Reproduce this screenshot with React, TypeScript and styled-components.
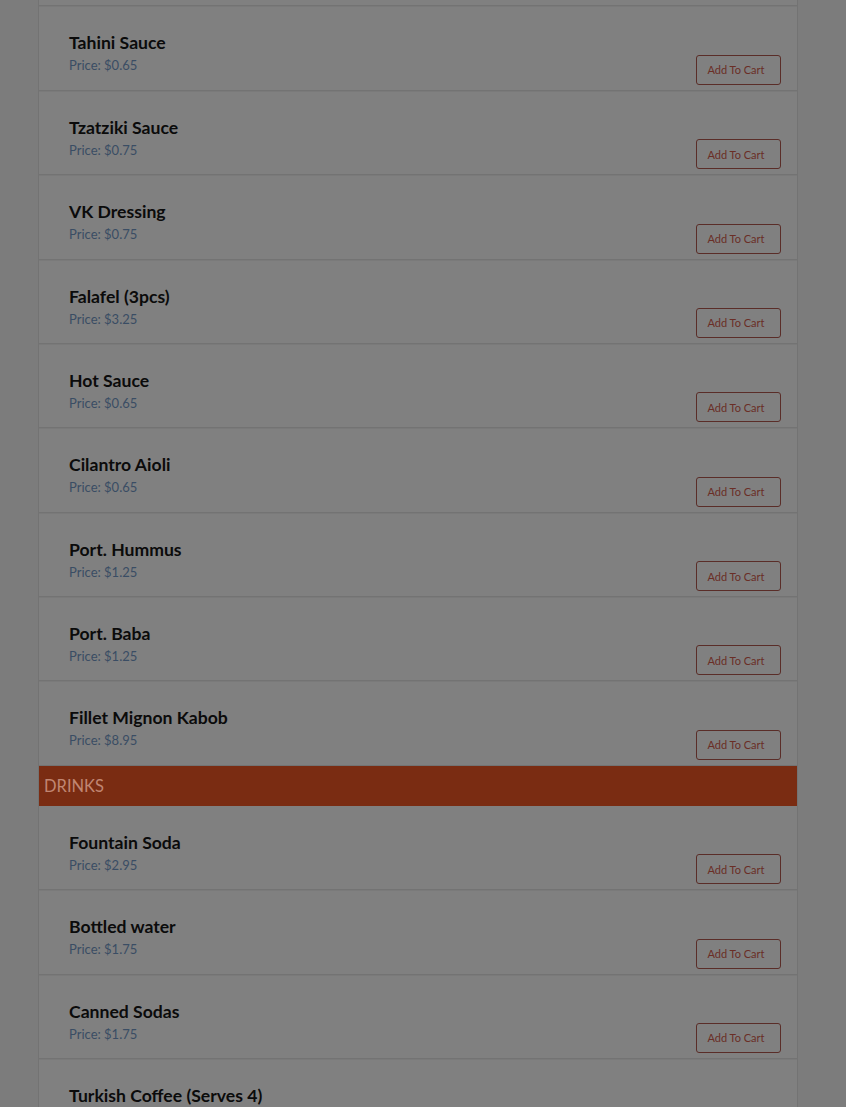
import React from 'react';
import styled, { createGlobalStyle } from 'styled-components';

const GlobalStyle = createGlobalStyle`
  html, body {
    margin: 0;
    padding: 0;
    background: #7c7c7c;
    overflow: hidden;
  }
  body {
    font-family: Lato, "Open Sans", sans-serif;
  }
`;

type Item = { name: string; price: string };
type Section = { title?: string; items: Item[] };

const sections: Section[] = [
  {
    items: [
      { name: 'Garlic Sauce', price: '$0.65' },
      { name: 'Tahini Sauce', price: '$0.65' },
      { name: 'Tzatziki Sauce', price: '$0.75' },
      { name: 'VK Dressing', price: '$0.75' },
      { name: 'Falafel (3pcs)', price: '$3.25' },
      { name: 'Hot Sauce', price: '$0.65' },
      { name: 'Cilantro Aioli', price: '$0.65' },
      { name: 'Port. Hummus', price: '$1.25' },
      { name: 'Port. Baba', price: '$1.25' },
      { name: 'Fillet Mignon Kabob', price: '$8.95' },
    ],
  },
  {
    title: 'DRINKS',
    items: [
      { name: 'Fountain Soda', price: '$2.95' },
      { name: 'Bottled water', price: '$1.75' },
      { name: 'Canned Sodas', price: '$1.75' },
      { name: 'Turkish Coffee (Serves 4)', price: '$4.95' },
    ],
  },
];

const Page = styled.div`
  height: 1107px;
  overflow: hidden;
`;

const Card = styled.div`
  width: 760px;
  margin: -78px 0 0 38px;
  box-sizing: border-box;
  background: #808080;
  border-left: 1px solid #737373;
  border-right: 1px solid #737373;
`;

const SectionHeader = styled.div`
  height: 40px;
  display: flex;
  align-items: center;
  padding-left: 5px;
  background: #7a2c12;
  color: #c08672;
  font-size: 16.5px;
  font-weight: 400;
`;

const Row = styled.div`
  height: 84.375px;
  box-sizing: border-box;
  display: flex;
  justify-content: space-between;
  padding: 27px 16px 5px 30px;
  border-bottom: 1px solid #737373;
  box-shadow: 0 1px 0 #7a7a7a;
`;

const Info = styled.div`
  display: flex;
  flex-direction: column;
`;

const Name = styled.div`
  font-size: 17.6px;
  line-height: 20px;
  font-weight: 700;
  color: #0b0b0b;
`;

const Price = styled.div`
  margin-top: 3px;
  font-size: 13px;
  line-height: 18px;
  color: #3a4d64;
`;

const CartButton = styled.button`
  align-self: flex-end;
  width: 85px;
  height: 30px;
  padding: 0 5px 0 0;
  box-sizing: border-box;
  background: transparent;
  border: 1px solid #5a2d28;
  border-radius: 3px;
  color: #6a2e26;
  font-family: Lato, "Open Sans", sans-serif;
  font-size: 11px;
  cursor: pointer;
`;

export default function App() {
  return (
    <Page>
      <GlobalStyle />
      <Card>
        {sections.map((section, i) => (
          <React.Fragment key={i}>
            {section.title && <SectionHeader>{section.title}</SectionHeader>}
            {section.items.map((item) => (
              <Row key={item.name}>
                <Info>
                  <Name>{item.name}</Name>
                  <Price>Price: {item.price}</Price>
                </Info>
                <CartButton>Add To Cart</CartButton>
              </Row>
            ))}
          </React.Fragment>
        ))}
      </Card>
    </Page>
  );
}
